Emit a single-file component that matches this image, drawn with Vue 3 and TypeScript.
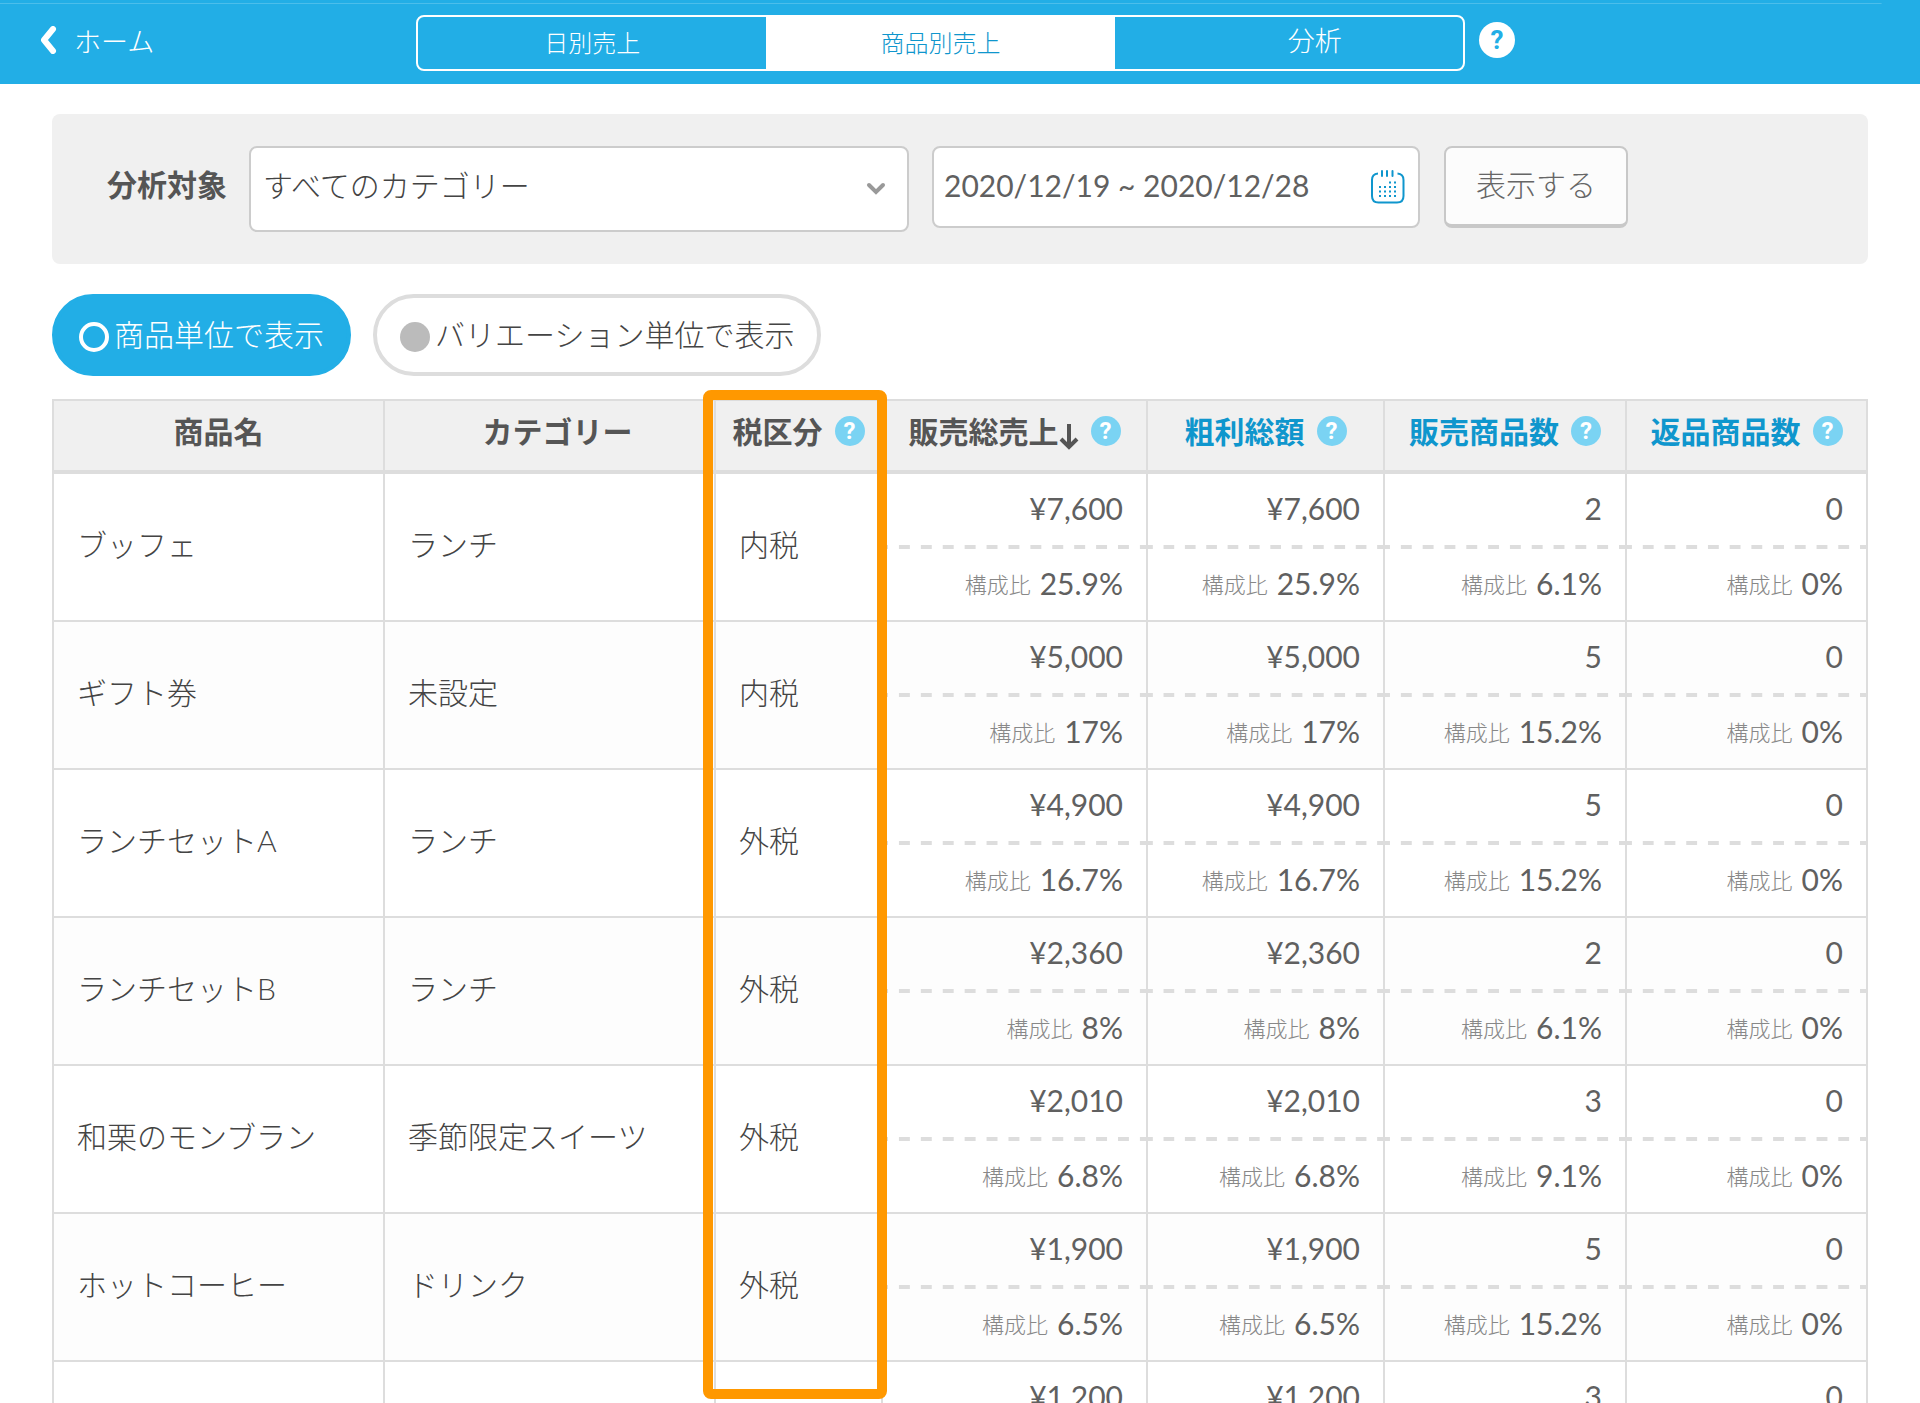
<script setup lang="ts">
import { ref } from 'vue'

interface Column {
  label: string
  link?: boolean
  sorted?: boolean
  help?: boolean
  framed?: boolean
}

interface Metric {
  value: string
  share?: string
}

interface Row {
  name: string
  category: string
  tax: string
  metrics: Metric[]
}

const tabs = ['日別売上', '商品別売上', '分析']
const activeTab = ref('商品別売上')
const unit = ref('item')
const period = ref('2020/12/19 ~ 2020/12/28')

const columns: Column[] = [
  { label: '商品名' },
  { label: 'カテゴリー' },
  { label: '税区分', help: true, framed: true },
  { label: '販売総売上', help: true, sorted: true },
  { label: '粗利総額', help: true, link: true },
  { label: '販売商品数', help: true, link: true },
  { label: '返品商品数', help: true, link: true },
]

function row(name: string, category: string, tax: string, sales: string, share: string, count: string, countShare: string): Row {
  return {
    name,
    category,
    tax,
    metrics: [
      { value: sales, share },
      { value: sales, share },
      { value: count, share: countShare },
      { value: '0', share: '0%' },
    ],
  }
}

const rows: Row[] = [
  row('ブッフェ', 'ランチ', '内税', '¥7,600', '25.9%', '2', '6.1%'),
  row('ギフト券', '未設定', '内税', '¥5,000', '17%', '5', '15.2%'),
  row('ランチセットA', 'ランチ', '外税', '¥4,900', '16.7%', '5', '15.2%'),
  row('ランチセットB', 'ランチ', '外税', '¥2,360', '8%', '2', '6.1%'),
  row('和栗のモンブラン', '季節限定スイーツ', '外税', '¥2,010', '6.8%', '3', '9.1%'),
  row('ホットコーヒー', 'ドリンク', '外税', '¥1,900', '6.5%', '5', '15.2%'),
  {
    name: '',
    category: '',
    tax: '',
    metrics: [{ value: '¥1,200' }, { value: '¥1,200' }, { value: '3' }, { value: '0' }],
  },
]
</script>

<template>
  <div class="app">
    <header class="topbar">
      <a class="back" href="#">
        <svg width="18" height="28" viewBox="0 0 18 28" aria-hidden="true">
          <path d="M13 3 L4 14 L13 25" fill="none" stroke="#fff" stroke-width="6" stroke-linecap="round" stroke-linejoin="round" />
        </svg>
        <span>ホーム</span>
      </a>
      <nav class="tabs">
        <button
          v-for="tab in tabs"
          :key="tab"
          type="button"
          class="tab"
          :class="{ active: tab === activeTab, large: tab === '分析' }"
          @click="activeTab = tab"
        >{{ tab }}</button>
      </nav>
      <button type="button" class="help help-main">?</button>
    </header>

    <main class="content">
      <form class="filter" @submit.prevent>
        <label class="filter-label" for="category">分析対象</label>
        <div class="field field-category">
          <select id="category" class="control">
            <option>すべてのカテゴリー</option>
          </select>
          <svg class="caret" width="20" height="14" viewBox="0 0 20 14" aria-hidden="true">
            <path d="M3 3 L10 10 L17 3" fill="none" stroke="#999" stroke-width="4" stroke-linecap="round" />
          </svg>
        </div>
        <div class="field field-period">
          <input v-model="period" class="control" type="text" aria-label="期間" />
          <svg class="calendar" width="36" height="36" viewBox="0 0 36 36" aria-hidden="true">
            <g fill="none" stroke="#0f96cd" stroke-width="2">
              <path d="M8 3.5 Q2 4 2 10 V26 Q2 32.500 8.500 32.500 H27 Q33.500 32.500 33.500 26 V10 Q33.500 4 27.500 3.500" />
              <path d="M12 1 V6 M17 1 V6 M22.500 1 V6" stroke-linecap="round" />
              <path d="M19 12.500 H26" stroke-dasharray="2 3" />
              <path d="M9 17 H26 M9 21.500 H26 M9 26 H26" stroke-dasharray="2 3" />
            </g>
          </svg>
        </div>
        <button type="submit" class="submit">表示する</button>
      </form>

      <div class="units">
        <label class="pill" :class="{ on: unit === 'item' }">
          <input v-model="unit" type="radio" name="unit" value="item" />
          <span>商品単位で表示</span>
        </label>
        <label class="pill" :class="{ on: unit === 'variation' }">
          <input v-model="unit" type="radio" name="unit" value="variation" />
          <span>バリエーション単位で表示</span>
        </label>
      </div>

      <table class="report">
        <colgroup>
          <col />
          <col />
          <col class="col-tax" />
          <col class="col-sales" />
          <col class="col-profit" />
          <col class="col-count" />
          <col class="col-returns" />
        </colgroup>
        <thead>
          <tr>
            <th v-for="column in columns" :key="column.label" scope="col">
              <div class="heading">
                <a v-if="column.link" href="#">{{ column.label }}</a>
                <span v-else>{{ column.label }}</span>
                <svg v-if="column.sorted" class="arrow" width="20" height="28" viewBox="0 0 20 28" aria-hidden="true">
                  <path d="M10 2 V25 M2 17 L10 25 L18 17" fill="none" stroke="#555" stroke-width="4" />
                </svg>
                <button v-if="column.help" type="button" class="help">?</button>
              </div>
              <div v-if="column.framed" class="frame"></div>
            </th>
          </tr>
        </thead>
        <tbody>
          <tr v-for="(item, index) in rows" :key="index">
            <td class="text">{{ item.name }}</td>
            <td class="text">{{ item.category }}</td>
            <td class="text">{{ item.tax }}</td>
            <td v-for="(metric, m) in item.metrics" :key="m" class="metric">
              <div class="value">{{ metric.value }}</div>
              <div class="dashes"></div>
              <div class="share">
                <template v-if="metric.share"><small>構成比</small>{{ metric.share }}</template>
              </div>
            </td>
          </tr>
        </tbody>
      </table>
    </main>
  </div>
</template>

<style>
body {
  margin: 0;
}
</style>

<style scoped>
.app {
  height: 100vh;
  overflow: hidden;
  background: #fff;
  color: #555;
  font-family: Lato, "Noto Sans CJK JP", sans-serif;
  font-size: 30px;
  font-weight: 300;
  line-height: 40px;
}

.app * {
  box-sizing: border-box;
}

button,
input,
select {
  margin: 0;
  font: inherit;
  color: inherit;
}

a {
  color: inherit;
  text-decoration: none;
}

.topbar {
  display: grid;
  grid-template-columns: 376px minmax(0, 1049px) 1fr;
  height: 84px;
  padding: 0 40px;
  background: linear-gradient(#4bbeeb, #4bbeeb) 0 3px / 98% 1px no-repeat #22aee6;
  color: #fff;
}

.back {
  display: flex;
  gap: 16px;
  height: 80px;
  align-items: center;
  font-size: 27px;
}

.back span {
  padding-top: 4px;
}

.tabs {
  display: grid;
  grid-template-columns: repeat(3, minmax(0, 1fr));
  height: 56px;
  margin-top: 15px;
  border: 2px solid #fff;
  border-radius: 8px;
  overflow: hidden;
}

.tab {
  padding: 0;
  border: 0;
  background: none;
  font-size: 24px;
}

.tab.large {
  padding: 0 0 4px 52px;
  font-size: 27px;
}

.tab.active {
  background: #fff;
  color: #0f96cd;
}

.help {
  width: 30px;
  height: 30px;
  padding: 0;
  border: 0;
  border-radius: 50%;
  background: #7ad3f3;
  color: #fff;
  font: 700 24px/30px Roboto, sans-serif;
  text-align: center;
}

.help-main {
  width: 36px;
  height: 36px;
  margin: 22px 0 0 14px;
  background: #fff;
  color: #22aee6;
  font-size: 26px;
  line-height: 36px;
}

.content {
  padding: 30px 52px 0;
}

.filter {
  display: flex;
  gap: 24px;
  height: 150px;
  padding: 32px 55px;
  border-radius: 8px;
  background: #f0f0f0;
}

.filter-label {
  padding-top: 18px;
  font-weight: 700;
}

.field {
  position: relative;
}

.field-category {
  width: 660px;
  height: 86px;
  margin-left: -2px;
}

.field-period {
  width: 488px;
  height: 82px;
  margin-left: -1px;
}

.control {
  display: block;
  width: 100%;
  height: 100%;
  padding: 0 12px 8px;
  border: 2px solid #ccc;
  border-radius: 8px;
  background: #fff;
  color: #444;
  appearance: none;
}

.field-period .control {
  padding: 0 10px 4px;
  color: #606060;
  font-weight: 400;
}

.caret {
  position: absolute;
  top: 36px;
  right: 23px;
}

.calendar {
  position: absolute;
  top: 24px;
  right: 14px;
}

.submit {
  width: 184px;
  height: 82px;
  padding: 0 0 4px;
  border: 2px solid #c8c8c8;
  border-bottom-width: 4px;
  border-radius: 8px;
  background: #fcfcfc;
  color: #666;
}

.units {
  display: flex;
  gap: 22px;
  margin: 30px 0 23px;
}

.pill {
  display: flex;
  align-items: center;
  gap: 5px;
  height: 82px;
  padding: 0 23px;
  border: 4px solid #ddd;
  border-radius: 41px;
  color: #444;
}

.pill span {
  padding-bottom: 2px;
}

.pill input {
  width: 30px;
  height: 30px;
  margin-top: 4px;
  border-radius: 50%;
  background: #bbb;
  appearance: none;
}

.pill.on {
  border-color: #22aee6;
  background: #22aee6;
  color: #fff;
}

.pill.on input {
  border: 4px solid #fff;
  background: none;
}

.report {
  width: 100%;
  table-layout: fixed;
  border-spacing: 0;
  border: solid #ddd;
  border-width: 2px 0 0 2px;
}

.col-tax {
  width: 167px;
}

.col-sales {
  width: 265px;
}

.col-profit {
  width: 237px;
}

.col-count {
  width: 242px;
}

.col-returns {
  width: 241px;
}

th,
td {
  padding: 0;
  border-right: 2px solid #ddd;
}

th {
  position: relative;
  height: 73px;
  border-bottom: 4px solid #ddd;
  background: #f0f0f0;
  font-weight: 700;
}

th:nth-child(2) {
  padding-left: 16px;
}

.heading {
  display: flex;
  align-items: center;
  justify-content: center;
  padding-bottom: 10px;
}

.heading a {
  color: #0f96cd;
}

.heading .help {
  margin-left: 12px;
}

.arrow {
  margin-top: 10px;
}

.frame {
  position: absolute;
  z-index: 1;
  top: -11px;
  left: -13px;
  right: -6px;
  height: calc(100vh - 394px);
  border: 10px solid #ff9800;
  border-radius: 8px;
  pointer-events: none;
}

td {
  height: 148px;
  border-bottom: 2px solid #ddd;
}

tbody tr:nth-child(even) {
  background: #fdfdfd;
}

.text {
  padding: 0 23px 6px;
  color: #444;
}

.metric {
  color: #606060;
  font-weight: 400;
  text-align: right;
}

.value,
.share {
  height: 71px;
  padding: 14px 23px 0;
}

.dashes {
  height: 4px;
  background: linear-gradient(90deg, #ddd 25%, transparent 25% 75%, #ddd 75%) 0 0 / 22px 4px round;
}

small {
  margin-right: 9px;
  color: #888;
  font-size: 22px;
  font-weight: 300;
  vertical-align: 2px;
}
</style>
